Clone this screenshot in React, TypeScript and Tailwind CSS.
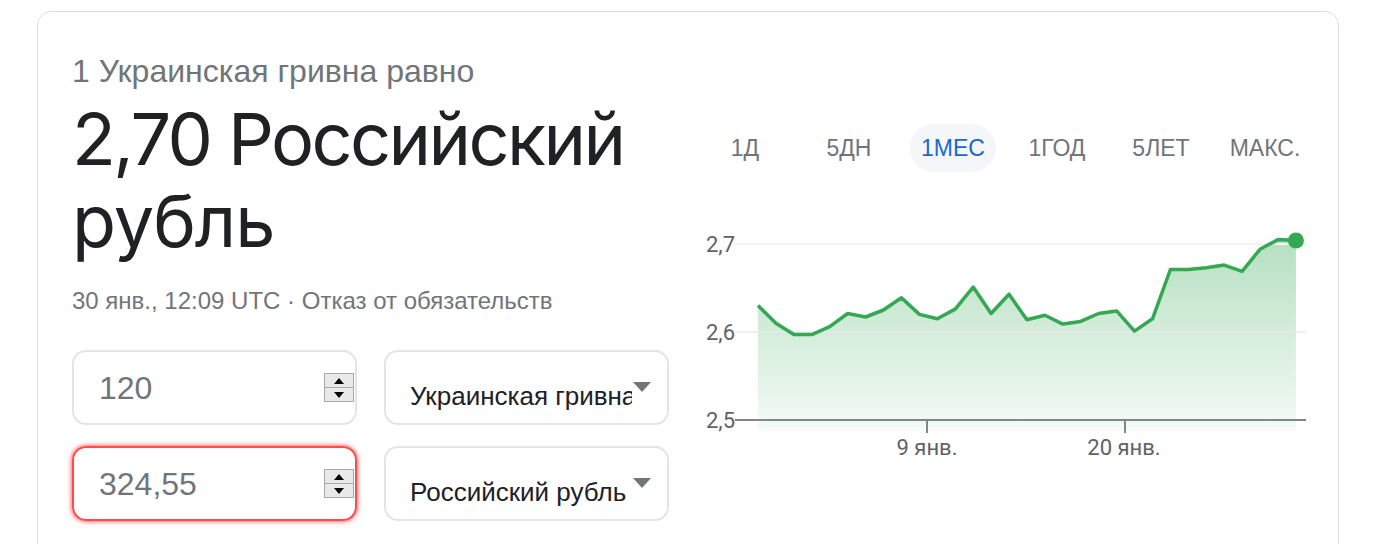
import React from 'react';

const rates = [
  2.63, 2.61, 2.597, 2.597, 2.606, 2.621, 2.617, 2.625, 2.639, 2.62, 2.615,
  2.626, 2.651, 2.621, 2.643, 2.614, 2.619, 2.609, 2.612, 2.621, 2.624, 2.601,
  2.615, 2.671, 2.671, 2.673, 2.676, 2.669, 2.694, 2.705, 2.704,
];

const tabs = ['1Д', '5ДН', '1МЕС', '1ГОД', '5ЛЕТ', 'МАКС.'];

function toY(v: number) {
  return 24 + ((2.7 - v) / 0.2) * 176;
}

function Chart() {
  const pts = rates.map((v, i) => [65 + i * 17.93, toY(v)] as const);
  const line = pts.map(([x, y], i) => `${i ? 'L' : 'M'}${x.toFixed(1)} ${y.toFixed(1)}`).join(' ');
  const last = pts[pts.length - 1];
  const area = `${line} L${last[0].toFixed(1)} 211 L65 211 Z`;

  return (
    <svg width="624" height="250" viewBox="0 0 624 250" className="block">
      <defs>
        <linearGradient id="fill" x1="0" y1="0" x2="0" y2="1">
          <stop offset="0%" stopColor="#34a853" stopOpacity="0.36" />
          <stop offset="100%" stopColor="#34a853" stopOpacity="0.05" />
        </linearGradient>
      </defs>
      <path d={area} fill="url(#fill)" />
      <line x1="42" y1="24" x2="613" y2="24" stroke="#f1f3f4" strokeWidth="2" />
      <line x1="42" y1="112" x2="613" y2="112" stroke="#e8eaed" strokeOpacity="0.7" strokeWidth="2" />
      <line x1="42" y1="200" x2="613" y2="200" stroke="#80868b" strokeWidth="2" />
      <line x1="234" y1="200" x2="234" y2="213" stroke="#80868b" strokeWidth="2" />
      <line x1="432" y1="200" x2="432" y2="213" stroke="#80868b" strokeWidth="2" />
      <path d={line} fill="none" stroke="#34a853" strokeWidth="3.5" strokeLinejoin="round" />
      <circle cx={last[0]} cy={last[1]} r="8" fill="#34a853" />
      <g fill="#5f6368" fontSize="22" fontFamily="Roboto, Arial, sans-serif">
        <text x="42" y="32" textAnchor="end">2,7</text>
        <text x="42" y="120" textAnchor="end">2,6</text>
        <text x="42" y="208" textAnchor="end">2,5</text>
        <text x="234" y="235" textAnchor="middle">9 янв.</text>
        <text x="431" y="235" textAnchor="middle">20 янв.</text>
      </g>
    </svg>
  );
}

function Spinner() {
  return (
    <div className="flex flex-col w-[30px] h-[29px] border border-[#a9a9a9] bg-[#e9e9e9]">
      <div className="flex-1 flex items-center justify-center border-b border-[#a9a9a9]">
        <svg width="10" height="6" viewBox="0 0 10 6"><path d="M0 6 L5 0 L10 6 Z" fill="#000" /></svg>
      </div>
      <div className="flex-1 flex items-center justify-center">
        <svg width="10" height="6" viewBox="0 0 10 6"><path d="M0 0 L5 6 L10 0 Z" fill="#000" /></svg>
      </div>
    </div>
  );
}

function AmountBox({ value, focused }: { value: string; focused?: boolean }) {
  return (
    <div
      className={
        focused
          ? 'w-[285px] h-[75px] rounded-[14px] border-2 border-[#ff4d4d] shadow-[0_0_5px_#ff3030] flex items-center justify-between pl-[25px] pr-[1px]'
          : 'w-[285px] h-[75px] rounded-[14px] border-2 border-[#e3e4e8] flex items-center justify-between pl-[25px] pr-[1px]'
      }
    >
      <span className="text-[32px] leading-none text-[#70757a]">{value}</span>
      <Spinner />
    </div>
  );
}

function CurrencySelect({ label }: { label: string }) {
  return (
    <div className="relative w-[285px] h-[75px] rounded-[14px] border-2 border-[#e3e4e8] pl-[24px] pr-[35px] pt-[29px]">
      <div className="overflow-hidden whitespace-nowrap text-[26px] leading-[30px] text-[#202124]">{label}</div>
      <svg className="absolute right-[16px] top-[30px]" width="18" height="10" viewBox="0 0 18 10">
        <path d="M0 0 L18 0 L9 10 Z" fill="#70757a" />
      </svg>
    </div>
  );
}

export default function App() {
  return (
    <div className="w-[1380px] h-[544px] overflow-hidden bg-white font-['Liberation_Sans',Arial,sans-serif]">
      <div className="ml-[37px] mt-[11px] w-[1302px] h-[600px] rounded-[14px] border border-[#dadce0] pl-[34px] pt-[39px] flex gap-[24px]">
        {/* left column */}
        <div className="w-[597px] flex flex-col">
          <div className="text-[32px] leading-[40px] text-[#70757a]">1 Украинская гривна равно</div>
          <div className="mt-[7px] text-[72px] leading-[82px] text-[#202124] font-['Inter',sans-serif] tracking-[-1px]">
            <span className="tracking-[-2.6px]">2,70 Российский</span> рубль
          </div>
          <div className="mt-[23px] text-[24px] leading-[32px] text-[#70757a]">
            30 янв., 12:09 UTC · Отказ от обязательств
          </div>
          <div className="mt-[33px] grid grid-cols-[285px_285px] gap-x-[27px] gap-y-[21px]">
            <AmountBox value="120" />
            <CurrencySelect label="Украинская гривна" />
            <AmountBox value="324,55" focused />
            <CurrencySelect label="Российский рубль" />
          </div>
        </div>

        {/* right column */}
        <div className="w-[624px] flex flex-col pt-[73px]">
          <div className="grid grid-cols-6 h-[48px]">
            {tabs.map((t) => (
              <div key={t} className="flex items-center justify-center">
                {t === '1МЕС' ? (
                  <div className="h-[48px] w-[86px] rounded-full bg-[#f4f6f9] flex items-center justify-center text-[23px] text-[#1967d2]">
                    {t}
                  </div>
                ) : (
                  <span className="text-[23px] text-[#70757a]">{t}</span>
                )}
              </div>
            ))}
          </div>
          <div className="mt-[48px]">
            <Chart />
          </div>
        </div>
      </div>
    </div>
  );
}
